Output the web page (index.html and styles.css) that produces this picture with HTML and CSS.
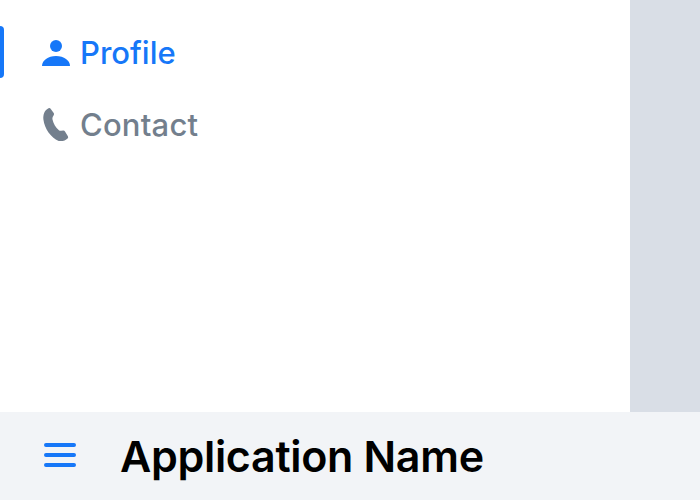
FILE: index.html
```html
<!DOCTYPE html>
<html lang="en">
<head>
<meta charset="utf-8">
<title>Application Name</title>
<link rel="stylesheet" href="styles.css">
</head>
<body>
<main class="content">
  <nav class="nav">
    <a class="item active">
      <svg class="icon" viewBox="0 0 32 36"><circle cx="16" cy="12" r="6"/><path d="M2 32C2 26.500 8 22 16 22s14 4.500 14 10z"/></svg>
      <span>Profile</span>
    </a>
    <a class="item contact">
      <svg class="icon" viewBox="0 0 32 36"><path d="M8.500 2.200Q9.800 1.500 10.600 2.700L13.700 7Q14.400 8 13.800 9L12.700 10.900Q12.200 12 12.500 13.500C13.400 17.700 15.700 21.500 18.900 24.200Q19.900 25 21 24.800L23.300 24.500Q24.400 24.400 25 25.400L27.900 30.300Q28.600 31.500 27.600 32.500C25.500 34.600 22 35.600 18.700 34.900C10.800 31.500 4.600 22.800 3.400 13.500C3 9 4.200 4.400 8.500 2.200z"/></svg>
      <span>Contact</span>
    </a>
  </nav>
</main>
<header class="bar">
  <svg class="menu" viewBox="0 0 32 28"><path d="M2 4h28M2 14h28M2 24h28"/></svg>
  <h1>Application Name</h1>
</header>
</body>
</html>
```
FILE: styles.css
```css
* { box-sizing: border-box; }
body { margin: 0; height: 500px; overflow: hidden; display: flex; flex-direction: column; font-family: Inter, sans-serif; background: #f2f4f7; }
.content { height: 412px; background: #d9dee6; }
.nav { width: 630px; height: 412px; padding-top: 26px; background: #fff; display: flex; flex-direction: column; gap: 20px; }
.item { height: 52px; padding-left: 36px; border-left: 4px solid transparent; display: flex; align-items: center; gap: 8px; color: #737f8d; font-size: 31px; font-weight: 500; line-height: 52px; }
.item span { padding-top: 2px; }
.contact span { letter-spacing: 0.2px; }
.active { color: #1677f8; border-left: 0; padding-left: 0; }
.active::before { content: ""; width: 4px; height: 52px; margin-right: 28px; border-radius: 0 4px 4px 0; background: #1677f8; }
.icon { width: 32px; height: 36px; fill: currentColor; }
.bar { height: 88px; padding-left: 44px; display: flex; align-items: center; }
.menu { width: 32px; height: 28px; margin: 0 44px 2px 0; fill: none; stroke: #1677f8; stroke-width: 4; stroke-linecap: round; }
h1 { margin: 0; font-size: 43px; font-weight: 600; line-height: 88px; letter-spacing: -0.32px; }
```
